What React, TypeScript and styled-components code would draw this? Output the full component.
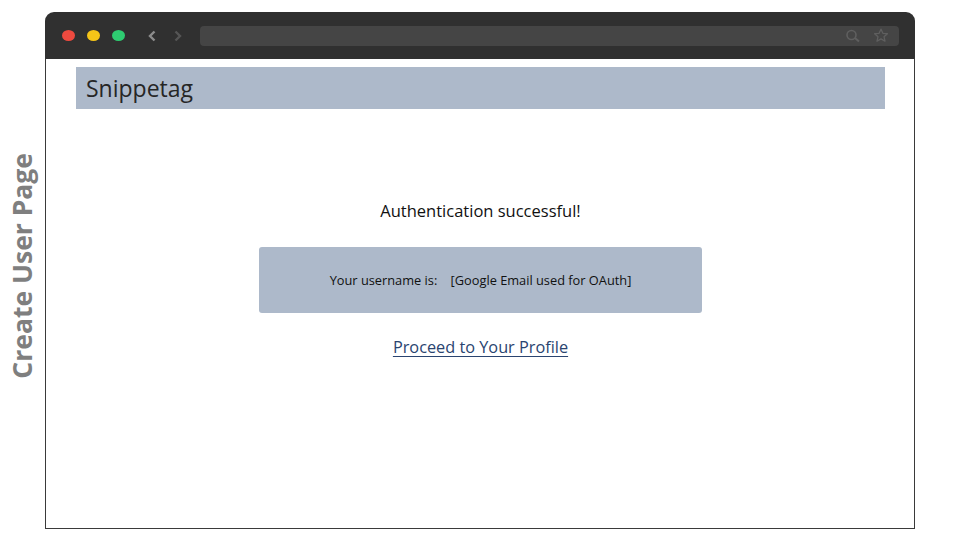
import React from "react";
import styled, { createGlobalStyle } from "styled-components";

const Global = createGlobalStyle`
  html, body { margin: 0; padding: 0; background: #ffffff; }
  body { font-family: "Open Sans", "Noto Sans", sans-serif; }
`;

const Page = styled.div`
  width: 960px;
  height: 540px;
  display: flex;
  box-sizing: border-box;
  padding-top: 12px;
  overflow: hidden;
`;

const SideLabel = styled.div`
  width: 45px;
  height: 517px;
  box-sizing: border-box;
  padding-bottom: 10px;
  display: flex;
  align-items: center;
  justify-content: center;
`;

const SideText = styled.span`
  writing-mode: vertical-rl;
  transform: rotate(180deg);
  font-family: "Open Sans", sans-serif;
  font-weight: 700;
  font-size: 26.5px;
  color: #7f7f7f;
  white-space: nowrap;
  line-height: 1;
`;

const Window = styled.div`
  width: 870px;
  height: 517px;
  display: flex;
  flex-direction: column;
`;

const TopBar = styled.div`
  height: 47px;
  flex: none;
  background: #303030;
  border-radius: 9px 9px 0 0;
  display: flex;
  align-items: center;
  padding: 0 16px 0 17px;
`;

const Dot = styled.span<{ $c: string }>`
  width: 13px;
  height: 11px;
  border-radius: 50%;
  background: ${(p) => p.$c};
  margin-right: 12px;
  flex: none;
`;

const Nav = styled.div`
  display: flex;
  align-items: center;
  gap: 16px;
  margin-left: 10px;
  margin-right: 17px;
`;

const Address = styled.div`
  flex: 1;
  height: 20px;
  background: #454545;
  border-radius: 4px;
  display: flex;
  align-items: center;
  justify-content: flex-end;
  gap: 12px;
  padding-right: 10px;
`;

const Content = styled.div`
  flex: 1;
  border: 1px solid #3a3a3a;
  border-top: none;
  background: #ffffff;
  display: flex;
  flex-direction: column;
  padding: 8px 29px 0 30px;
`;

const Header = styled.div`
  height: 42px;
  background: #adb9ca;
  display: flex;
  align-items: center;
  padding-left: 10px;
  font-size: 23px;
  color: #262626;
`;

const Main = styled.div`
  display: flex;
  flex-direction: column;
  align-items: center;
  margin-top: 88px;
`;

const Title = styled.div`
  font-size: 16.5px;
  color: #111;
  line-height: 28px;
`;

const InfoBox = styled.div`
  margin-top: 22px;
  width: 443px;
  height: 66px;
  background: #adb9ca;
  border-radius: 3px;
  display: flex;
  align-items: center;
  justify-content: center;
  font-size: 12.8px;
  color: #111;
  white-space: pre;
`;

const Link = styled.a`
  margin-top: 20px;
  font-size: 16.3px;
  line-height: 28px;
  color: #2a4470;
  text-decoration: underline;
  text-underline-offset: 3px;
  text-decoration-thickness: 1px;
  cursor: pointer;
`;

export default function App() {
  return (
    <>
      <Global />
      <Page>
        <SideLabel>
          <SideText>Create User Page</SideText>
        </SideLabel>
        <Window>
          <TopBar>
            <Dot $c="#ee4a3f" />
            <Dot $c="#f5c518" />
            <Dot $c="#2ecc71" />
            <Nav>
              <svg width="10" height="12" viewBox="0 0 10 12">
                <path d="M7.5 1.5 L3 6 L7.5 10.5" fill="none" stroke="#8c8c8c" strokeWidth="2.4" />
              </svg>
              <svg width="10" height="12" viewBox="0 0 10 12">
                <path d="M2.5 1.5 L7 6 L2.5 10.5" fill="none" stroke="#555555" strokeWidth="2.4" />
              </svg>
            </Nav>
            <Address>
              <svg width="16" height="14" viewBox="0 0 16 14">
                <circle cx="6.5" cy="6" r="4.5" fill="none" stroke="#5f5f5f" strokeWidth="1.6" />
                <path d="M10 9 L14 12.5" stroke="#5f5f5f" strokeWidth="2" />
              </svg>
              <svg width="16" height="15" viewBox="0 0 16 15">
                <path
                  d="M8 1.2 L9.9 5.3 L14.4 5.7 L11 8.7 L12 13.2 L8 10.9 L4 13.2 L5 8.7 L1.6 5.7 L6.1 5.3 Z"
                  fill="none"
                  stroke="#5f5f5f"
                  strokeWidth="1.3"
                  strokeLinejoin="round"
                />
              </svg>
            </Address>
          </TopBar>
          <Content>
            <Header>Snippetag</Header>
            <Main>
              <Title>Authentication successful!</Title>
              <InfoBox>{"Your username is:    [Google Email used for OAuth]"}</InfoBox>
              <Link>Proceed to Your Profile</Link>
            </Main>
          </Content>
        </Window>
      </Page>
    </>
  );
}
